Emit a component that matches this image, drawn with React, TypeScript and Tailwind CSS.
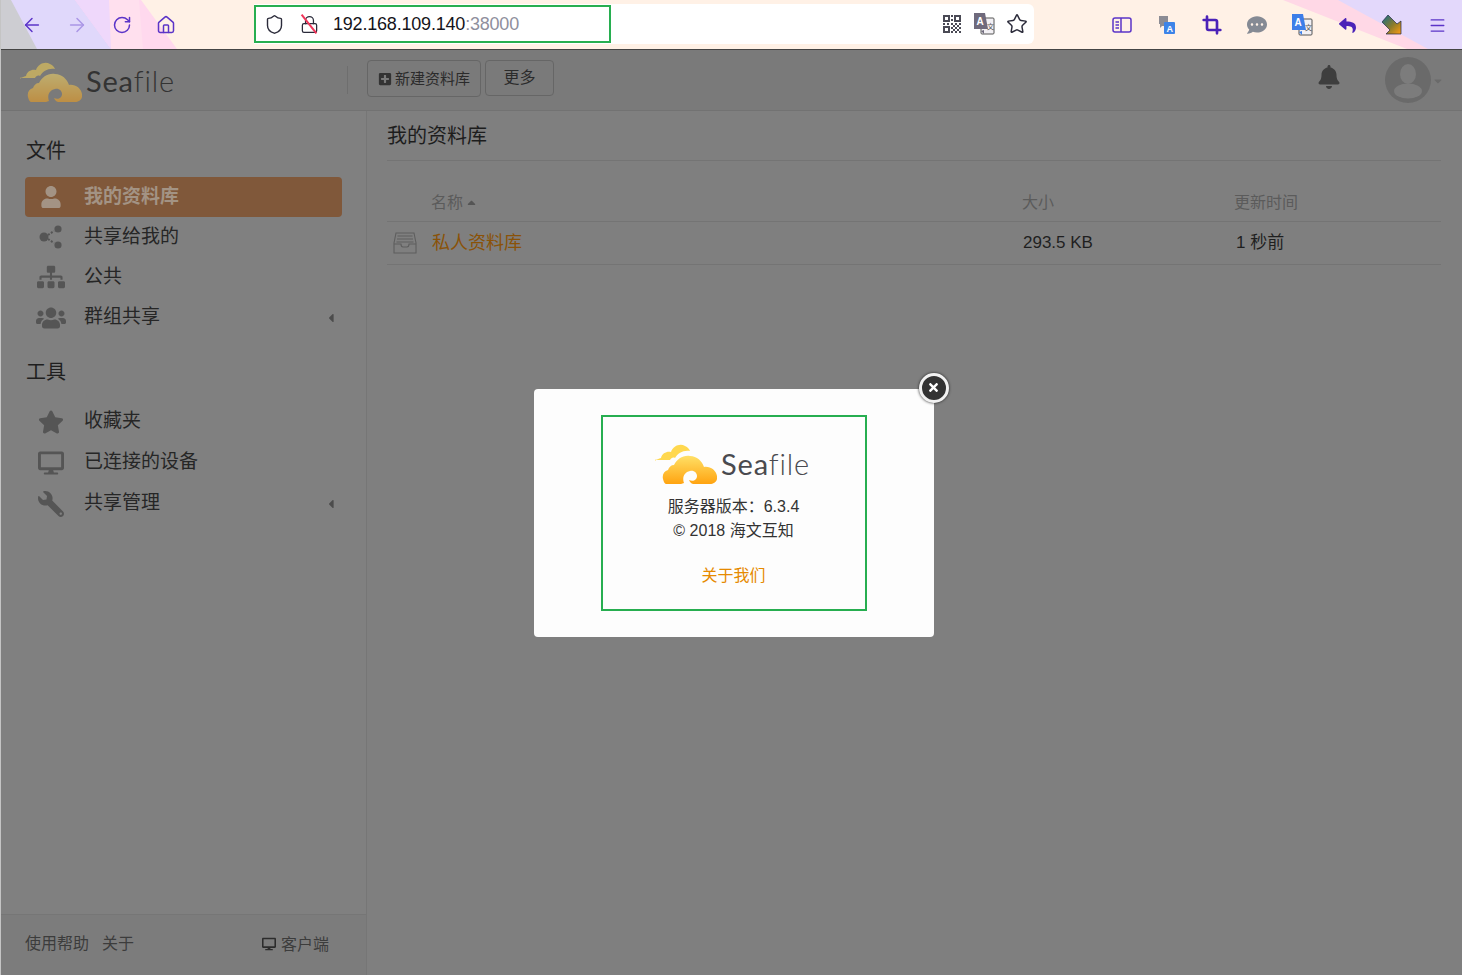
import { ArrowLeft, ArrowRight, Crop, Home, Lock, Menu, RotateCw, Shield, Star } from 'lucide-react'
import { FaBell, FaDesktop, FaPlusSquare, FaReply, FaSitemap, FaStar, FaUser, FaUsers, FaWrench, FaCaretLeft, FaCaretUp, FaCaretDown, FaTimes, FaCommentDots } from 'react-icons/fa'
import type { ReactNode } from 'react'

const font = 'font-["Liberation_Sans","Noto_Sans_CJK_SC",sans-serif]'

function CloudLogo({ dim, id }: { dim?: boolean; id: string }) {
  return (
    <svg width="62" height="42" viewBox="0 0 62 42" className={dim ? 'opacity-50' : ''}>
      <defs>
        <linearGradient id={id} x1="0" y1="0" x2="0" y2="1">
          <stop offset="0" stopColor="#ffe066" />
          <stop offset="1" stopColor="#ffa310" />
        </linearGradient>
      </defs>
      <path
        d="M0 19c1-2 4-2 6-3 1-5 6-7 10-6 2-6 9-9 14-6 3 1 4 3 5 5-7-1-12 2-15 7-2-1-4 0-5 2H3c-2 0-3-0-3-1z"
        fill="#ffd84f"
      />
      <path
        d="M8 37c-1-4 1-8 5-9 1-3 3-5 6-5 3-6 9-10 16-9 7 0 12 5 14 11 6-1 12 3 13 9 1 5-3 8-7 8H42c-4 1-7-1-8-4 4 2 8 0 8-4 0-3-3-6-7-5-6 1-8 7-6 12-4 2-8 1-12 1h-3c-4 1-5-1-6-5z"
        fill={`url(#${id})`}
      />
    </svg>
  )
}

function ShareIcon() {
  return (
    <svg width="24" height="24" viewBox="0 0 24 24" fill="#555">
      <circle cx="5" cy="12" r="4.5" />
      <circle cx="19" cy="4" r="3.6" />
      <circle cx="19" cy="20" r="3.6" />
      <path d="M9 10l6-4M9 14l6 4" stroke="#555" strokeWidth="2" strokeDasharray="2 1.5" />
    </svg>
  )
}

function TranslateIcon({ color }: { color: string }) {
  return (
    <svg width="22" height="22" viewBox="0 0 22 22">
      <rect x="8" y="5" width="13" height="16" rx="1" fill="#f2f0f4" stroke="#555" />
      <path d="M1 0h11l3 16H7l-1 0-2 0H1z" fill={color} />
      <path d="M8 18l3 3v-4z" fill={color} />
      <text x="3.5" y="12" fontSize="10" fontWeight="700" fill="#fff" fontFamily="Liberation Sans">A</text>
      <text x="14" y="16" fontSize="7" fill="#555" fontFamily="Noto Sans CJK SC">文</text>
    </svg>
  )
}

function ToolbarSlot({ w, children }: { w: string; children: ReactNode }) {
  return <div className={`${w} flex shrink-0 items-center justify-center`}>{children}</div>
}

function BrowserBar() {
  return (
    <div className="relative flex h-[49px] shrink-0 items-start overflow-hidden bg-[#fff1e6]">
      {/* firefox theme shapes */}
      <svg className="absolute inset-0" width="1462" height="49" viewBox="0 0 1462 49">
        <path d="M0 0h140l36 49H0z" fill="#ffd9ee" />
        <path d="M0 0h78l64 49H0z" fill="#ffd4f4" />
        <path d="M0 0h74l36 49H0z" fill="#e0d8fb" />
        <path d="M0 0h10l26 49H0z" fill="#cdcdd2" />
        <path d="M74 0h34l34 49h-32z" fill="#efd8fb" />
        <path d="M108 0h30l4 49h-32z" fill="#ffe0ee" />
        <path d="M1282 0h180v49h-56z" fill="#ffd8e6" />
        <path d="M1337 0h125v49h-35z" fill="#e3d8fb" />
      </svg>
      <div className="relative flex h-full w-[253px] shrink-0 items-center pl-[8px] pt-px text-[#5b34c8]">
        <ToolbarSlot w="w-[45px]"><ArrowLeft size={22} strokeWidth={1.6} /></ToolbarSlot>
        <ToolbarSlot w="w-[45px]"><ArrowRight size={22} strokeWidth={1.6} className="opacity-40" /></ToolbarSlot>
        <ToolbarSlot w="w-[45px]"><RotateCw size={20} strokeWidth={1.8} /></ToolbarSlot>
        <ToolbarSlot w="w-[44px]"><Home size={20} strokeWidth={1.8} /></ToolbarSlot>
      </div>
      <div className="relative mt-1 flex h-10 w-[780px] shrink-0 items-center rounded-r-md bg-white">
        <div className="flex h-[38px] w-[357px] shrink-0 items-center border-2 border-[#27ae50]">
          <Shield size={21} strokeWidth={1.6} className="ml-[8px] text-[#2b2b3a]" />
          <div className="relative ml-[14px] flex h-5 w-5 items-center justify-center">
            <Lock size={19} strokeWidth={1.6} className="text-[#2b2b3a]" />
            <div className="absolute left-[9px] top-[-2px] h-6 w-0.5 -rotate-[38deg] bg-[#f0365a]" />
          </div>
          <span className={`${font} ml-[14px] text-[18px] tracking-[-0.2px] text-[#15141a]`}>
            192.168.109.140<span className="text-[#8f8f9d]">:38000</span>
          </span>
        </div>
        <div className="ml-auto flex items-center gap-[11px] pr-[6px] text-[#2b2b3a]">
          <svg width="20" height="20" viewBox="0 0 20 20" fill="#4a4a55">
            <path d="M1 1h7v7H1zM3 3v3h3V3zM12 1h7v7h-7zM14 3v3h3V3zM1 12h7v7H1zM3 14v3h3v-3z" fillRule="evenodd" />
            <path d="M9 1h2v2H9zM9 5h2v2H9zM9 9h2v2H9zM1 9h2v2H1zM5 9h2v2H5zM13 9h2v2h-2zM17 9h2v2h-2zM11 11h2v2h-2zM15 11h2v2h-2zM9 13h2v2H9zM13 13h2v2h-2zM17 13h2v2h-2zM11 15h2v2h-2zM15 15h2v2h-2zM9 17h2v2H9zM13 17h2v2h-2zM17 17h2v2h-2z" />
          </svg>
          <TranslateIcon color="#6f6a7c" />
          <Star size={22} strokeWidth={1.6} />
        </div>
      </div>
      <div className="relative ml-[65px] flex h-full items-center pt-px text-[#5b34c8]">
        <ToolbarSlot w="w-[45px]">
          <svg width="20" height="16" viewBox="0 0 20 16" fill="none" stroke="#5b34c8" strokeWidth="1.5">
            <rect x="1" y="1" width="18" height="14" rx="2" />
            <path d="M9 1v14M3.5 5H7M3.5 8H7M3.5 11H7" />
          </svg>
        </ToolbarSlot>
        <ToolbarSlot w="w-[46px]">
          <svg width="18" height="20" viewBox="0 0 18 20">
            <path d="M1 1h9v10H4l-2 2V9H1z" fill="#8c8c94" />
            <rect x="6" y="7" width="11" height="12" rx="1" fill="#3d84e8" />
            <text x="8.5" y="17" fontSize="9" fontWeight="700" fill="#fff" fontFamily="Liberation Sans">A</text>
          </svg>
        </ToolbarSlot>
        <ToolbarSlot w="w-[44px]"><Crop size={20} strokeWidth={3.2} className="text-[#4b22b8]" /></ToolbarSlot>
        <ToolbarSlot w="w-[46px]"><FaCommentDots size={20} className="text-[#858a94]" /></ToolbarSlot>
        <ToolbarSlot w="w-[44px]"><TranslateIcon color="#3d7ee8" /></ToolbarSlot>
        <ToolbarSlot w="w-[46px]"><FaReply size={17} className="text-[#4b22b8]" /></ToolbarSlot>
        <ToolbarSlot w="w-[44px]">
          <svg width="20" height="20" viewBox="0 0 20 20">
            <defs>
              <linearGradient id="arrowFill" x1="0" y1="0" x2="1" y2="1">
                <stop offset="0" stopColor="#0f6d8c" />
                <stop offset="0.55" stopColor="#8a7b2c" />
                <stop offset="1" stopColor="#ff9d12" />
              </linearGradient>
            </defs>
            <path d="M6 0l9 9 4-3v13H4l4-4-8-8z" fill="url(#arrowFill)" stroke="#222a44" strokeWidth="0.7" />
          </svg>
        </ToolbarSlot>
        <ToolbarSlot w="w-[46px]"><Menu size={19} strokeWidth={1.6} /></ToolbarSlot>
      </div>
    </div>
  )
}

function SeafileHeader() {
  return (
    <header className="flex h-[61px] shrink-0 items-center border-b border-[#727272] bg-[#7a7a7a]">
      <div className="flex w-[346px] shrink-0 items-center pl-[19px] pt-[2px]">
        <CloudLogo dim id="logoHeader" />
        <span className="ml-[4px] font-['Lato',sans-serif] text-[29px] tracking-[0.8px] text-[#333]">
          <span className="font-normal">Sea</span><span className="font-light">file</span>
        </span>
      </div>
      <div className="h-7 w-px bg-[#6e6e6e]" />
      <div className={`${font} ml-[19px] flex items-start gap-1 self-start pt-[10px] text-[#2b2b2b]`}>
        <button className="flex h-[37px] w-[114px] items-center justify-center gap-[3px] rounded-sm border border-[#666] text-[15px]">
          <FaPlusSquare size={14} className="text-[#333]" />
          <span className="pt-[2px]">新建资料库</span>
        </button>
        <button className="h-9 w-[69px] rounded-sm border border-[#666] text-[16px]">更多</button>
      </div>
      <div className="ml-auto flex items-center pr-[18px]">
        <FaBell size={24} className="mb-[6px] text-[#3e3e3e]" />
        <div className="ml-[44px] flex h-[46px] w-[46px] items-end justify-center overflow-hidden rounded-full bg-[#6a6a6a]">
          <svg width="46" height="46" viewBox="0 0 46 46" fill="#7c7c7c">
            <ellipse cx="23" cy="17" rx="8" ry="10" />
            <ellipse cx="23" cy="34" rx="14" ry="7.5" />
          </svg>
        </div>
        <FaCaretDown size={12} className="ml-px mt-[2px] text-[#6a6a6a]" />
      </div>
    </header>
  )
}

function NavRow({
  icon,
  label,
  active,
  caret,
  h = 'h-10',
}: {
  icon: ReactNode
  label: string
  active?: boolean
  caret?: boolean
  h?: string
}) {
  return (
    <div
      className={`flex ${h} items-center rounded-sm pl-[10px] pr-1 ${active ? 'bg-[#80583a] font-bold text-[#a39384]' : 'text-[#262626]'}`}
    >
      <div className={`flex w-[32px] justify-center ${active ? 'text-[#a39384]' : 'text-[#555]'}`}>{icon}</div>
      <span className="ml-[17px] text-[19px]">{label}</span>
      {caret && <FaCaretLeft size={14} className="ml-auto text-[#4c4c4c]" />}
    </div>
  )
}

function Sidebar() {
  return (
    <aside className={`${font} flex w-[366px] shrink-0 flex-col border-r border-[#767676] bg-[#808080]`}>
      <div className="flex-1 pl-6 pr-6 pt-[26px]">
        <h3 className="mb-[12px] pl-px text-[20px] leading-7 text-[#1f1f1f]">文件</h3>
        <NavRow active icon={<FaUser size={22} />} label="我的资料库" />
        <NavRow icon={<ShareIcon />} label="共享给我的" />
        <NavRow icon={<FaSitemap size={28} />} label="公共" />
        <NavRow icon={<FaUsers size={30} />} label="群组共享" caret h="h-[41px]" />
        <h3 className="mb-[15px] mt-[20px] pl-px text-[20px] leading-7 text-[#1f1f1f]">工具</h3>
        <NavRow icon={<FaStar size={26} />} label="收藏夹" h="h-[41px]" />
        <NavRow icon={<FaDesktop size={26} />} label="已连接的设备" h="h-[41px]" />
        <NavRow icon={<FaWrench size={26} className="-scale-x-100" />} label="共享管理" caret h="h-[41px]" />
      </div>
      <div className="flex h-[61px] items-center border-t border-[#767676] bg-[#7c7c7c] pl-6 pr-[37px] text-[16px] text-[#3c3c3c]">
        <span className="mb-[3px]">使用帮助</span>
        <span className="mb-[3px] ml-[13px]">关于</span>
        <span className="ml-auto flex items-center gap-[5px]">
          <FaDesktop size={14} className="mb-[3px] text-[#2c2c2c]" />
          客户端
        </span>
      </div>
    </aside>
  )
}

function LibraryTable() {
  return (
    <main className={`${font} flex-1 bg-[#7f7f7f] pl-5 pr-[21px]`}>
      <h2 className="flex h-[50px] items-center border-b border-[#747474] text-[20px] text-[#1d1d1d]">我的资料库</h2>
      <div className="mt-[21px] grid h-10 grid-cols-[635px_212px_1fr] items-center border-b border-[#747474] pt-[2px] text-[16px] text-[#5b5b5b]">
        <span className="flex items-center gap-[2px] pl-[44px]">名称<FaCaretUp size={13} className="text-[#555]" /></span>
        <span>大小</span>
        <span>更新时间</span>
      </div>
      <div className="grid h-[43px] grid-cols-[635px_212px_1fr] items-center border-b border-[#747474] text-[17px] text-[#1f1f1f]">
        <span className="flex items-center pl-[6px]">
          <svg width="24" height="24" viewBox="0 0 24 24" fill="none" stroke="#5e5e5e" strokeWidth="1.1">
            <path d="M1 12l2-10h18l2 10v10H1zM1 13h7c0 2 1 3 2 3h4c1 0 2-1 2-3h7M4.5 5h15M4 8h16M3.5 11h17" />
          </svg>
          <span className="ml-[15px] text-[18px] text-[#8a5208]">私人资料库</span>
        </span>
        <span className="pl-px">293.5 KB</span>
        <span className="pl-[2px]">1 秒前</span>
      </div>
    </main>
  )
}

function AboutDialog() {
  return (
    <div className="absolute inset-x-0 bottom-0 top-[50px] flex items-center justify-center pl-1">
      <div className="relative flex h-[248px] w-[400px] items-center justify-center rounded bg-[#fdfdfd]">
        <button className="absolute -right-[15px] -top-[16px] flex h-[30px] w-[30px] items-center justify-center rounded-full border-[3px] border-[#f2f2f2] bg-[#333] text-white shadow-[0_0_3px_#222]">
          <FaTimes size={13} />
        </button>
        <div className={`${font} flex h-[196px] w-[266px] flex-col items-center border-2 border-[#27ae50] pt-[25px] text-center text-[16px] text-[#333]`}>
          <div className="mr-[2px] flex items-center">
            <CloudLogo id="logoDialog" />
            <span className="ml-[4px] font-['Lato',sans-serif] text-[29px] tracking-[0.8px] text-[#4a4a4f]">
              <span className="font-normal">Sea</span><span className="font-light">file</span>
            </span>
          </div>
          <p className="mt-[10px] leading-6">服务器版本：6.3.4</p>
          <p className="leading-6">© 2018 海文互知</p>
          <a className="mt-[21px] leading-6 text-[#e68a00]">关于我们</a>
        </div>
      </div>
    </div>
  )
}

export default function App() {
  return (
    <div className="relative flex h-[975px] w-[1462px] flex-col overflow-hidden border-l border-[#c4c4c4] bg-[#7f7f7f]">
      <BrowserBar />
      <div className="h-px shrink-0 bg-[#444]" />
      <SeafileHeader />
      <div className="flex min-h-0 flex-1">
        <Sidebar />
        <LibraryTable />
      </div>
      <AboutDialog />
    </div>
  )
}
